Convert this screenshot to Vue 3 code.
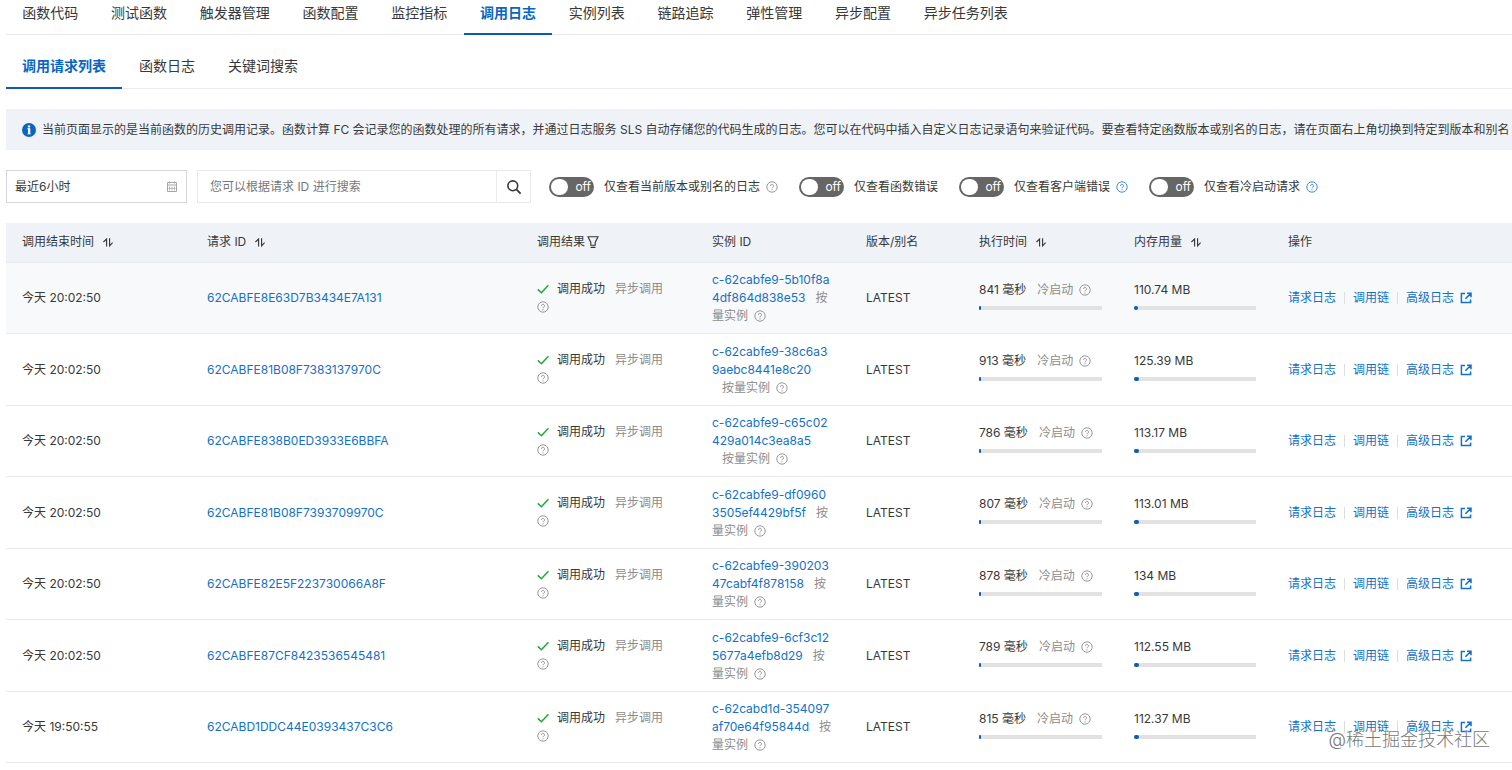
<script setup>
import { ref } from 'vue'

const tabs = [
  '函数代码', '测试函数', '触发器管理', '函数配置', '监控指标', '调用日志',
  '实例列表', '链路追踪', '弹性管理', '异步配置', '异步任务列表'
]
const activeTab = ref('调用日志')

const subTabs = ['调用请求列表', '函数日志', '关键词搜索']
const activeSubTab = ref('调用请求列表')

const timeRange = ref('最近6小时')
const keyword = ref('')

const filters = ref([
  { id: 'version', label: '仅查看当前版本或别名的日志', help: 'gray', on: false },
  { id: 'fn-error', label: '仅查看函数错误', help: '', on: false },
  { id: 'client-error', label: '仅查看客户端错误', help: 'blue', on: false },
  { id: 'cold', label: '仅查看冷启动请求', help: 'blue', on: false }
])

const columns = [
  { key: 'time', title: '调用结束时间', sort: true },
  { key: 'request', title: '请求 ID', sort: true },
  { key: 'result', title: '调用结果', filter: true },
  { key: 'instance', title: '实例 ID' },
  { key: 'version', title: '版本/别名' },
  { key: 'duration', title: '执行时间', sort: true },
  { key: 'memory', title: '内存用量', sort: true },
  { key: 'actions', title: '操作' }
]

// instance: las dos líneas del ID; mode: el texto que sigue al ID y el de la tercera línea
const rows = [
  { time: '今天 20:02:50', request: '62CABFE8E63D7B3434E7A131', instance: ['c-62cabfe9-5b10f8a', '4df864d838e53'], mode: ['按', '量实例'], duration: 841, memory: '110.74', used: 3.6 },
  { time: '今天 20:02:50', request: '62CABFE81B08F7383137970C', instance: ['c-62cabfe9-38c6a3', '9aebc8441e8c20'], mode: ['', '按量实例'], duration: 913, memory: '125.39', used: 4.1 },
  { time: '今天 20:02:50', request: '62CABFE838B0ED3933E6BBFA', instance: ['c-62cabfe9-c65c02', '429a014c3ea8a5'], mode: ['', '按量实例'], duration: 786, memory: '113.17', used: 3.7 },
  { time: '今天 20:02:50', request: '62CABFE81B08F7393709970C', instance: ['c-62cabfe9-df0960', '3505ef4429bf5f'], mode: ['按', '量实例'], duration: 807, memory: '113.01', used: 3.7 },
  { time: '今天 20:02:50', request: '62CABFE82E5F223730066A8F', instance: ['c-62cabfe9-390203', '47cabf4f878158'], mode: ['按', '量实例'], duration: 878, memory: '134', used: 4.4 },
  { time: '今天 20:02:50', request: '62CABFE87CF8423536545481', instance: ['c-62cabfe9-6cf3c12', '5677a4efb8d29'], mode: ['按', '量实例'], duration: 789, memory: '112.55', used: 3.7 },
  { time: '今天 19:50:55', request: '62CABD1DDC44E0393437C3C6', instance: ['c-62cabd1d-354097', 'af70e64f95844d'], mode: ['按', '量实例'], duration: 815, memory: '112.37', used: 3.7 }
]
</script>

<template>
  <main class="page" lang="zh-CN">
    <!-- Símbolos compartidos -->
    <svg class="sprite" aria-hidden="true">
      <symbol id="help" viewBox="0 0 12 12">
        <circle cx="6" cy="6" r="5.2" fill="none" stroke="currentColor" stroke-width="0.9" />
        <path d="M4.5 4.9a1.5 1.5 0 1 1 2.3 1.2c-.6.4-.8.6-.8 1.2" fill="none" stroke="currentColor" stroke-width="0.9" />
        <circle cx="6" cy="8.8" r="0.6" fill="currentColor" />
      </symbol>
      <symbol id="sort" viewBox="0 0 12 12">
        <path d="M1.4 6 4.6 3V10.6M7.6 2.2V9.8l3-3.2" fill="none" stroke="currentColor" stroke-width="1.1" />
      </symbol>
    </svg>

    <nav class="tabs">
      <div class="tabs-main">
        <button v-for="tab in tabs" :key="tab" type="button" class="tab" :class="{ active: tab === activeTab }"
          @click="activeTab = tab">{{ tab }}</button>
      </div>
    </nav>

    <nav class="tabs tabs-sub">
      <button v-for="tab in subTabs" :key="tab" type="button" class="tab" :class="{ active: tab === activeSubTab }"
        @click="activeSubTab = tab">{{ tab }}</button>
    </nav>

    <div class="notice">
      <svg class="notice-icon" viewBox="0 0 14 14" aria-hidden="true">
        <circle cx="7" cy="7" r="7" fill="#0a64c4" />
        <circle cx="7" cy="3.4" r="1.2" fill="#fff" />
        <path d="M5.4 5.6h2.6v5M5.4 5.8h2.4M5.2 11h3.8" fill="none" stroke="#fff" stroke-width="0.6" />
        <path d="M6 5.4h2v5.6H6z" fill="#fff" />
      </svg>
      <p>当前页面显示的是当前函数的历史调用记录。函数计算 FC 会记录您的函数处理的所有请求，并通过日志服务 SLS 自动存储您的代码生成的日志。您可以在代码中插入自定义日志记录语句来验证代码。要查看特定函数版本或别名的日志，请在页面右上角切换到特定到版本和别名</p>
    </div>

    <form class="filters" @submit.prevent>
      <div class="range">
        <input v-model="timeRange" type="text" aria-label="时间范围" readonly />
        <svg class="calendar" viewBox="0 0 12 12" aria-hidden="true">
          <path d="M1.5 1.5h9v9h-9zM1.5 4h9M3.5 0.5v2M8.5 0.5v2" fill="none" stroke="currentColor" />
          <path d="M3.5 5.5v4M6 5.5v4M8.5 5.5v4M2.5 7.5h7" fill="none" stroke="currentColor" stroke-width="0.7" />
        </svg>
      </div>
      <div class="search">
        <input v-model="keyword" type="text" aria-label="请求 ID" placeholder="您可以根据请求 ID 进行搜索" />
        <button type="submit" aria-label="搜索">
          <svg viewBox="0 0 16 16" aria-hidden="true">
            <circle cx="6.8" cy="6.8" r="4.9" fill="none" stroke="currentColor" stroke-width="1.6" />
            <path d="m10.4 10.4 4.2 4.2" stroke="currentColor" stroke-width="1.8" />
          </svg>
        </button>
      </div>
      <div class="switches">
        <div v-for="item in filters" :key="item.id" class="switch-item">
          <label class="switch">
            <input v-model="item.on" type="checkbox" role="switch" />
            <span class="track" :class="{ on: item.on }"><span class="knob"></span>{{ item.on ? 'on' : 'off' }}</span>
            <span>{{ item.label }}</span>
          </label>
          <svg v-if="item.help" class="help" :class="item.help"><use href="#help" /></svg>
        </div>
      </div>
    </form>

    <table class="log-table">
      <colgroup>
        <col v-for="col in columns" :key="col.key" :class="'col-' + col.key" />
      </colgroup>
      <thead>
        <tr>
          <th v-for="col in columns" :key="col.key" scope="col">
            <div class="th-inner">
              {{ col.title }}
              <button v-if="col.sort" type="button" class="icon-btn sort" aria-label="排序">
                <svg><use href="#sort" /></svg>
              </button>
              <button v-if="col.filter" type="button" class="icon-btn filter" aria-label="筛选">
                <svg viewBox="0 0 12 12">
                  <path d="M1 .8h10L8.2 6.4v2.8H3.8V6.4zM3.6 11.4h4.8" fill="none" stroke="currentColor" stroke-width="1.1" />
                </svg>
              </button>
            </div>
          </th>
        </tr>
      </thead>
      <tbody>
        <tr v-for="row in rows" :key="row.request">
          <td>{{ row.time }}</td>
          <td><a href="#">{{ row.request }}</a></td>
          <td>
            <div class="result">
              <svg class="check" viewBox="0 0 12 12" aria-hidden="true">
                <path d="m.8 6.4 3.6 3.4 7-7.6" fill="none" stroke="currentColor" stroke-width="1.5" />
              </svg>
              <span>调用成功</span>
              <span class="muted">异步调用</span>
              <svg class="help gray"><use href="#help" /></svg>
            </div>
          </td>
          <td class="instance">
            <a href="#">{{ row.instance[0] }}<br />{{ row.instance[1] }}</a>
            <span v-if="row.mode[0]" class="muted mode">{{ row.mode[0] }}</span>
            <div class="muted mode-rest" :class="{ indent: !row.mode[0] }">
              {{ row.mode[1] }}
              <svg class="help gray"><use href="#help" /></svg>
            </div>
          </td>
          <td>LATEST</td>
          <td>
            <div class="metric">
              <span>{{ row.duration }} 毫秒</span>
              <span class="muted">冷启动</span>
              <svg class="help gray"><use href="#help" /></svg>
            </div>
            <div class="bar"><div class="bar-fill" :style="{ width: row.duration / 600 + '%' }"></div></div>
          </td>
          <td>
            <div class="metric">{{ row.memory }} MB</div>
            <div class="bar"><div class="bar-fill" :style="{ width: row.used + '%' }"></div></div>
          </td>
          <td>
            <div class="actions">
              <a href="#">请求日志</a>
              <a href="#">调用链</a>
              <a href="#">高级日志
                <svg class="external" viewBox="0 0 12 12" aria-hidden="true">
                  <path d="M5 1.6H1.4v9h9.2V7.4M7 1.2h4v4M10.6 1.6 5.4 6.8" fill="none" stroke="currentColor" stroke-width="1.5" />
                </svg>
              </a>
            </div>
          </td>
        </tr>
      </tbody>
    </table>

    <div class="watermark">@稀土掘金技术社区</div>
  </main>
</template>

<style>
body {
  background: #fff;
  overflow: hidden;
}
</style>

<style scoped>
.page {
  position: relative;
  padding-left: 6px;
  font-family: Inter, "Noto Sans CJK SC", sans-serif;
  font-size: 12px;
  line-height: 18px;
  color: #383838;
}

.sprite {
  position: absolute;
  width: 0;
  height: 0;
}

button,
input {
  font: inherit;
  color: inherit;
  margin: 0;
}

button {
  padding: 0;
  border: none;
  background: none;
  cursor: pointer;
}

a {
  color: #1470c8;
  text-decoration: none;
}

.muted {
  color: #8c8c8c;
}

/* Pestañas */
.tabs {
  display: flex;
  box-shadow: inset 0 -1px #ebebeb;
}

.tab {
  padding: 0 16px 10px;
  border-bottom: 2px solid transparent;
  font-size: 14px;
  line-height: 20px;
  white-space: nowrap;
}

.tab.active {
  color: #0a64c4;
  border-bottom-color: #0a5cb8;
  font-weight: 600;
}

.tabs-main {
  display: flex;
  flex: 1;
  max-width: 1018px;
  padding-top: 3px;
}

.tabs-main .tab {
  flex: 1 0 auto;
}

.tabs-sub {
  gap: 1px;
  padding-top: 21px;
}

.tabs-sub .tab {
  padding-bottom: 11px;
}

/* Aviso */
.notice {
  display: flex;
  align-items: center;
  gap: 6px;
  margin-top: 20px;
  padding: 12px 0 11px 16px;
  background: #eff3f8;
  overflow: hidden;
}

.notice p {
  margin: 0;
  white-space: nowrap;
}

.notice-icon {
  flex: none;
  width: 14px;
  height: 14px;
}

/* Filtros */
.filters {
  display: flex;
  align-items: center;
  margin: 20px 0;
}

.range,
.search {
  display: flex;
  align-items: center;
  box-sizing: border-box;
  height: 33px;
  border: 1px solid #d4d8dc;
}

.range {
  width: 181px;
  padding: 0 8px;
}

.range input,
.search input {
  flex: 1;
  min-width: 0;
  padding: 0;
  border: none;
  outline: none;
  background: none;
}

.calendar {
  width: 12px;
  height: 12px;
  color: #a6a6a6;
}

.search {
  width: 334px;
  margin-left: 10px;
  border-color: #e8e8e8;
}

.search input {
  padding-left: 12px;
}

.search input::placeholder {
  color: #777;
  opacity: 1;
}

.search button {
  display: flex;
  align-items: center;
  justify-content: center;
  align-self: stretch;
  width: 34px;
  border-left: 1px solid #ececec;
}

.search button svg {
  width: 16px;
  height: 16px;
}

.switches {
  display: flex;
  gap: 21px;
  margin-left: 18px;
}

.switch-item {
  display: flex;
  align-items: center;
  gap: 6px;
}

.switch {
  position: relative;
  display: flex;
  align-items: center;
  gap: 10px;
  white-space: nowrap;
  cursor: pointer;
}

.switch input {
  position: absolute;
  opacity: 0;
}

.track {
  display: flex;
  align-items: center;
  justify-content: space-between;
  box-sizing: border-box;
  width: 45px;
  height: 20px;
  padding: 0 3px 0 2px;
  border-radius: 10px;
  background: #666;
  color: #fff;
}

.track.on {
  flex-direction: row-reverse;
  background: #0a64c4;
}

.knob {
  width: 17px;
  height: 16px;
  border-radius: 8px;
  background: #fff;
}

.help {
  flex: none;
  width: 12px;
  height: 12px;
}

.help.gray {
  color: #8c8c8c;
}

.help.blue {
  color: #2b7fe0;
}

/* Tabla */
.log-table {
  width: 100%;
  table-layout: fixed;
  border-collapse: separate;
  border-spacing: 0;
}

.col-time {
  width: 185px;
}

.col-request {
  width: 330px;
}

.col-result {
  width: 175px;
}

.col-instance {
  width: 154px;
}

.col-version {
  width: 113px;
}

.col-duration {
  width: 155px;
}

.col-memory {
  width: 154px;
}

th {
  padding: 10px 16px 11px;
  background: #eff3f8;
  border-bottom: 1px solid #e6eaef;
  font-weight: 400;
  text-align: left;
}

.th-inner {
  display: flex;
  align-items: center;
}

.icon-btn {
  display: flex;
  color: #333;
}

.icon-btn svg {
  width: 12px;
  height: 12px;
}

.icon-btn.sort {
  margin-left: 8px;
}

.icon-btn.filter {
  margin-left: 2px;
}

td {
  box-sizing: border-box;
  height: 71px;
  padding: 8px 16px;
  border-bottom: 1px solid #e8ebee;
}

tbody tr:nth-child(even) td {
  height: 72px;
}

tbody tr:first-child td {
  background: #f7f9fb;
}

.result {
  display: flex;
  flex-wrap: wrap;
  align-items: center;
  column-gap: 10px;
}

.check {
  width: 12px;
  height: 12px;
  margin-right: -2px;
  color: #1fa838;
}

.result .help {
  margin: 3px 0 4px;
}

.instance {
  white-space: nowrap;
}

.mode {
  margin-left: 10px;
}

.mode-rest {
  display: flex;
  align-items: center;
  gap: 6px;
}

.mode-rest.indent {
  padding-left: 10px;
}

.metric {
  display: flex;
  align-items: center;
  gap: 6px;
  white-space: nowrap;
}

.metric .muted {
  margin-left: 5px;
}

.bar {
  height: 4px;
  margin: 7px 0 6px;
  background: #e2e2e2;
  overflow: hidden;
}

.bar-fill {
  height: 100%;
  border-radius: 2px;
  background: #0a5cb8;
}

.actions {
  display: flex;
  align-items: center;
  white-space: nowrap;
}

.actions a {
  display: flex;
  align-items: center;
  gap: 6px;
}

.actions a + a::before {
  content: "";
  width: 1px;
  height: 12px;
  margin: 0 2px 0 8px;
  background: #dedede;
}

.external {
  width: 12px;
  height: 12px;
}

.watermark {
  position: absolute;
  right: 22px;
  bottom: 10px;
  font-size: 18px;
  line-height: 26px;
  font-weight: 300;
  color: #777;
  text-shadow: 0 0 1px #fff, 1px 1px 1px #fff;
  pointer-events: none;
}
</style>
